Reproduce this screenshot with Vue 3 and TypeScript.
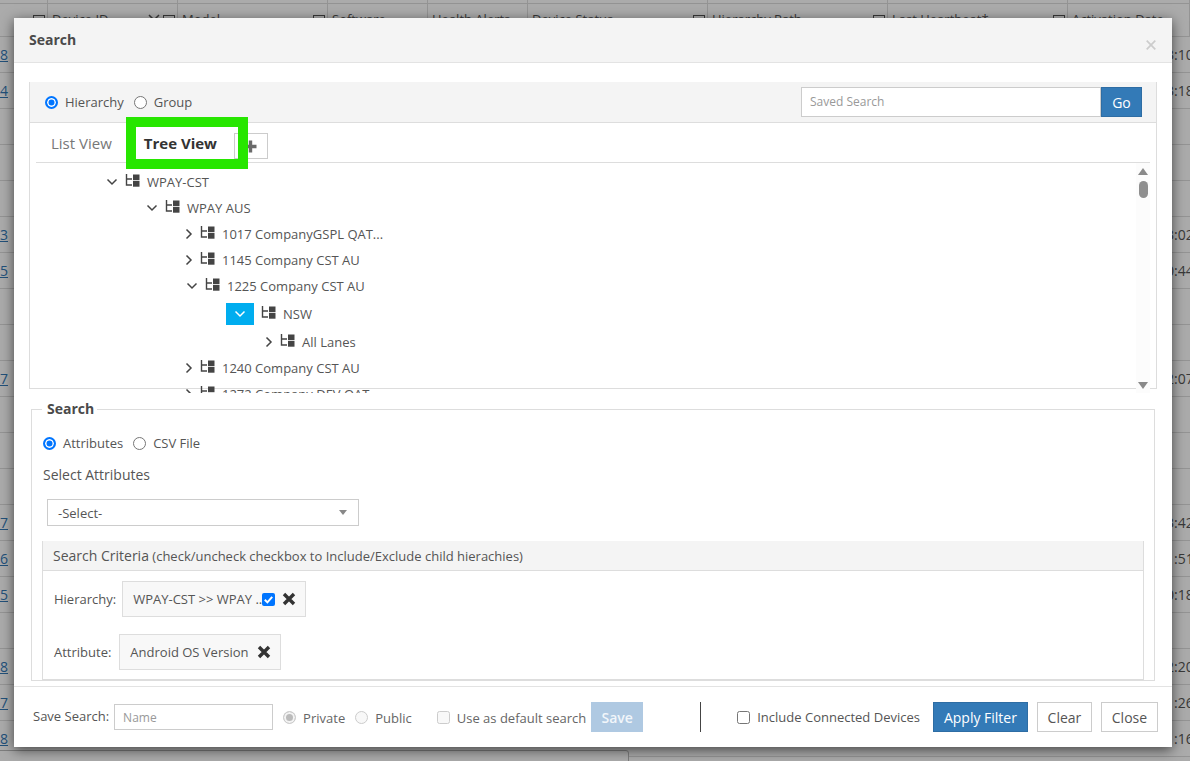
<script setup lang="ts">
const heads = [
  { label: '', w: 48, icon: true, x: false },
  { label: 'Device ID', w: 130, icon: true, x: true },
  { label: 'Model', w: 150, icon: true, x: false },
  { label: 'Software', w: 100, icon: false, x: false },
  { label: 'Health Alerts', w: 100, icon: false, x: false },
  { label: 'Device Status', w: 180, icon: true, x: false },
  { label: 'Hierarchy Path', w: 180, icon: true, x: false },
  { label: 'Last Heartbeat*', w: 180, icon: true, x: false },
  { label: 'Activation Date', w: 122, icon: false, x: false },
]
const idEnd = ['8', '4', '', '', '', '3', '5', '', '', '7', '', '', '', '7', '6', '5', '', '8', '7', '8']
const timeEnd = ['3:10', '3:18', '', '', '', '3:02', '0:44', '', '', '2:07', '', '', '', '3:42', '1:51', '0:18', '', '2:20', '1:26', '1:16']

interface TreeNode { label: string; open: boolean; active?: boolean; cls: string }
const tree: TreeNode[] = [
  { label: 'WPAY-CST', open: true, cls: 'd0' },
  { label: 'WPAY AUS', open: true, cls: 'd1' },
  { label: '1017 CompanyGSPL QAT...', open: false, cls: 'd2' },
  { label: '1145 Company CST AU', open: false, cls: 'd2' },
  { label: '1225 Company CST AU', open: true, cls: 'd2o' },
  { label: 'NSW', open: true, active: true, cls: 'd3' },
  { label: 'All Lanes', open: false, cls: 'd4' },
  { label: '1240 Company CST AU', open: false, cls: 'd2' },
  { label: '1272 Company DEV QAT', open: false, cls: 'd2' },
]
</script>

<template>
  <div class="page">
    <div class="thead">
      <div v-for="h in heads" :key="h.label" class="th" :style="{ width: h.w + 'px' }">
        <span>{{ h.label }}</span>
        <svg v-if="h.x" class="thx" width="12" height="12" viewBox="0 0 12 12"><path d="M1 1l10 10M11 1 1 11" stroke="#555" stroke-width="1.5"/></svg>
        <span v-if="h.icon" class="thicon" :class="{ nox: !h.x }"></span>
      </div>
    </div>
    <div v-for="(e, i) in idEnd" :key="i" class="tr">
      <a class="idend">{{ e }}</a>
      <span class="timeend">{{ timeEnd[i] }}</span>
    </div>
    <div class="pager"></div>
    <div class="backdrop"></div>

    <section class="modal">
      <header class="mhead">
        <h4>Search</h4>
        <svg class="x" width="10" height="10" viewBox="0 0 10 10"><path d="M.7.7l8.6 8.6M9.3.7.7 9.3" stroke="#ccc" stroke-width="1.7"/></svg>
      </header>

      <div class="panel">
        <div class="bar">
          <label class="opt"><span class="radio on"></span>Hierarchy</label>
          <label class="opt"><span class="radio"></span>Group</label>
          <div class="saved">
            <div class="savedinput">Saved Search</div>
            <button class="go">Go</button>
          </div>
        </div>
        <div class="tabs">
          <span class="tab">List View</span>
          <span class="tab active">Tree View</span>
          <span class="plus">
            <svg width="13" height="13" viewBox="0 0 13 13"><path d="M4.8.5h3.4v4.3h4.3v3.4H8.2v4.3H4.8V8.2H.5V4.8h4.3z" fill="#6a6a6a"/></svg>
          </span>
        </div>
        <div class="treewrap">
          <div class="tree">
            <div v-for="n in tree" :key="n.label" class="node" :class="n.cls">
              <span class="toggle" :class="{ act: n.active, closed: !n.open }">
                <svg v-if="n.open" width="12" height="8" viewBox="0 0 12 8"><path d="M1.5 1.5 6 6l4.5-4.5" fill="none" stroke="currentColor" stroke-width="1.5"/></svg>
                <svg v-else width="8" height="12" viewBox="0 0 8 12"><path d="M1.5 1.5 6 6l-4.5 4.5" fill="none" stroke="currentColor" stroke-width="1.5"/></svg>
              </span>
              <svg class="ico" width="15" height="13" viewBox="0 0 15 13">
                <path d="M1.5 0v11H7M1.5 5H7" fill="none" stroke="#444" stroke-width="1.4"/>
                <rect x="8" y="0.5" width="6.5" height="5.7" fill="#444"/>
                <rect x="8" y="7" width="6.5" height="5.7" fill="#444"/>
              </svg>
              <span class="nlabel">{{ n.label }}</span>
            </div>
          </div>
          <div class="scroll">
            <svg width="10" height="7" viewBox="0 0 10 7"><path d="M5 0l5 7H0z" fill="#8a8a8a"/></svg>
            <span class="thumb"></span>
            <span class="grow"></span>
            <svg width="10" height="7" viewBox="0 0 10 7"><path d="M0 0h10L5 7z" fill="#8a8a8a"/></svg>
          </div>
        </div>
      </div>

      <fieldset class="fs">
        <legend>Search</legend>
        <div class="attrs">
          <label class="opt"><span class="radio on"></span>Attributes</label>
          <label class="opt"><span class="radio"></span>CSV File</label>
        </div>
        <div class="selabel">Select Attributes</div>
        <div class="select"><span>-Select-</span><i class="caret"></i></div>
        <div class="crit">
          <div class="crithead"><b>Search Criteria</b> (check/uncheck checkbox to Include/Exclude child hierachies)</div>
          <div class="critbody">
            <div class="critrow r1">
              <span class="clabel">Hierarchy:</span>
              <div class="chip">
                <span>WPAY-CST &gt;&gt; WPAY ..</span>
                <span class="check">
                  <svg width="13" height="13" viewBox="0 0 13 13"><path d="M2.8 6.8 5.4 9.4 10.2 3.8" fill="none" stroke="#fff" stroke-width="2"/></svg>
                </span>
                <svg class="cross" width="14" height="14" viewBox="0 0 14 14"><path d="M2 2l10 10M12 2 2 12" stroke="#333" stroke-width="3.4"/></svg>
              </div>
            </div>
            <div class="critrow r2">
              <span class="clabel">Attribute:</span>
              <div class="chip c2">
                <span>Android OS Version</span>
                <svg class="cross" width="14" height="14" viewBox="0 0 14 14"><path d="M2 2l10 10M12 2 2 12" stroke="#333" stroke-width="3.4"/></svg>
              </div>
            </div>
          </div>
        </div>
      </fieldset>

      <footer class="mfoot">
        <span class="slabel">Save Search:</span>
        <div class="nameinput">Name</div>
        <label class="opt dis"><span class="radio dison"></span>Private</label>
        <label class="opt dis pub"><span class="radio disoff"></span>Public</label>
        <label class="opt dis def"><span class="cb disoff"></span>Use as default search</label>
        <button class="save">Save</button>
        <span class="vsep"></span>
        <label class="opt conn"><span class="cb"></span>Include Connected Devices</label>
        <button class="apply">Apply Filter</button>
        <button class="plain clear">Clear</button>
        <button class="plain close">Close</button>
      </footer>
    </section>

    <div class="annot"></div>
  </div>
</template>

<style>
html, body { margin: 0; overflow: hidden; }
</style>

<style scoped>
* { box-sizing: border-box; }
.page {
  position: relative;
  width: 1190px;
  height: 761px;
  overflow: hidden;
  background: #fff;
  font-family: "Open Sans", "Liberation Sans", sans-serif;
  font-size: 13px;
  color: #555;
}
.thead {
  display: flex;
  height: 37px;
  border-bottom: 1px solid #ddd;
  background: linear-gradient(#ddd, #ddd) 0 3px / 100% 1px no-repeat;
}
.th {
  display: flex;
  border-right: 1px solid #ddd;
  padding: 10px 2px 0 4px;
  font-size: 13px;
  line-height: 18px;
  white-space: nowrap;
}
.thx { margin: 4px 3px 0 auto; flex: none; }
.thicon { width: 12px; height: 12px; border: 1.5px solid #555; margin-top: 5px; flex: none; }
.thicon.nox { margin-left: auto; }
.tr {
  position: relative;
  height: 36px;
  border-bottom: 1px solid #ddd;
  line-height: 36px;
  font-size: 14px;
  white-space: nowrap;
}
.tr:last-of-type { height: 30px; border-bottom: 0; }
.idend { position: absolute; left: 0; color: #337ab7; text-decoration: underline; }
.timeend { position: absolute; left: 1166px; }
.pager {
  position: absolute;
  left: -6px;
  top: 750px;
  width: 635px;
  height: 30px;
  border: 1px solid #bbb;
  border-radius: 3px;
  background: #fff;
}
.backdrop { position: absolute; inset: 0; background: rgba(0, 0, 0, 0.33); }

.modal {
  position: absolute;
  left: 14px;
  top: 18px;
  width: 1158px;
  height: 729px;
  background: #fff;
  box-shadow: 0 3px 12px rgba(0, 0, 0, 0.6);
  display: flex;
  flex-direction: column;
}
.mhead {
  height: 45px;
  flex: none;
  background: #f4f4f4;
  border-bottom: 1px solid #e3e3e3;
  display: flex;
  justify-content: space-between;
  padding: 13px 15px;
}
.mhead h4 { margin: 0; font-size: 14px; font-weight: 700; color: #4a4a4a; line-height: 18px; }
.x { margin: 9px 1px 0 0; }

.panel {
  margin: 19px 15px 0 15px;
  height: 307px;
  flex: none;
  border-left: 1px solid #ddd;
  border-right: 1px solid #ddd;
  border-bottom: 1px solid #ddd;
  position: relative;
}
.bar {
  height: 41px;
  background: #f4f4f4;
  border-bottom: 1px solid #ddd;
  display: flex;
  align-items: center;
  padding-left: 15px;
  gap: 10px;
}
.opt { display: inline-flex; align-items: center; gap: 7px; font-size: 13px; color: #555; }
.radio {
  width: 13px; height: 13px; border-radius: 50%;
  border: 1px solid #767676; background: #fff; display: inline-block; flex: none;
}
.radio.on { border: 2px solid #0075ff; box-shadow: inset 0 0 0 1.5px #fff; background: #0075ff; }
.saved { margin-left: auto; margin-right: 14px; display: flex; }
.savedinput {
  width: 300px; height: 30px; border: 1px solid #ccc; background: #fff;
  color: #999; font-size: 12px; line-height: 28px; padding-left: 8px;
}
.go {
  width: 41px; height: 30px; background: #337ab7; border: 1px solid #2e6da4;
  color: #fff; font: 14px "Open Sans", sans-serif; padding: 0;
}
.tabs {
  height: 40px;
  margin: 0 6px;
  border-bottom: 1px solid #ddd;
  display: flex;
  position: relative;
}
.tab { font-size: 15px; padding: 10px 15px 0 15px; color: #777; line-height: 20px; white-space: nowrap; }
.tab.active { font-weight: 700; color: #333; margin-left: 2px; padding-left: 15px; padding-right: 17px; }
.plus {
  position: absolute; left: 198px; top: 10px; width: 34px; height: 26px;
  border: 1px solid #ccc; display: flex; align-items: center; justify-content: center; padding-right: 1px;
}
.treewrap { display: flex; height: 230px; margin: 0 6px; overflow: hidden; position: relative; }
.tree { flex: 1; overflow: hidden; padding-top: 6px; }
.node { display: flex; align-items: center; height: 26px; white-space: nowrap; font-size: 13px; color: #555; }
.d0 { padding-left: 70px; }
.d1 { padding-left: 110px; }
.d2 { padding-left: 149px; }
.d2o { padding-left: 150px; }
.d3 { padding-left: 190px; height: 30px; }
.d4 { padding-left: 229px; }
.toggle { display: inline-flex; align-items: center; justify-content: center; width: 12px; color: #444; flex: none; }
.toggle.closed { width: 8px; }
.toggle.act { width: 28px; height: 22px; background: #00adef; color: #fff; }
.ico { margin-left: 7px; flex: none; margin-top: -3px; }
.nlabel { margin-left: 7px; }
.scroll {
  width: 14px; flex: none; background: #fcfcfc; display: flex; flex-direction: column; align-items: center;
  padding: 5px 0 4px 0; height: 230px;
}
.thumb { width: 9px; height: 17px; background: #8f8f8f; border-radius: 5px; margin-top: 6px; }
.grow { flex: 1; }

.fs {
  margin: 11px 0 0 17px;
  width: 1124px;
  height: 281px;
  flex: none;
  border: 1px solid #ddd;
  padding: 0 10px;
  min-width: 0;
}
.fs legend { font-size: 14px; font-weight: 700; color: #4a4a4a; margin: 0; padding: 0 3px 0 5px; line-height: 18px; }
.attrs { display: flex; gap: 10px; margin-top: 16px; padding-left: 1px; }
.selabel { font-size: 14px; margin-top: 13px; line-height: 20px; padding-left: 1px; }
.select {
  width: 312px; height: 27px; margin: 14px 0 0 5px; border: 1px solid #ccc;
  display: flex; align-items: center; justify-content: space-between; padding: 0 11px 0 10px; font-size: 13px;
}
.caret { border-left: 4px solid transparent; border-right: 4px solid transparent; border-top: 5px solid #888; }
.crit { margin-top: 15px; border-left: 1px solid #ddd; border-right: 1px solid #ddd; border-bottom: 2px solid #ddd; height: 140px; }
.crithead { height: 30px; background: #f4f4f4; border-bottom: 1px solid #ddd; padding: 5px 10px; font-size: 13px; line-height: 20px; color: #555; }
.crithead b { font-weight: 400; font-size: 14px; }
.critbody { padding: 10px 11px; }
.critrow { display: flex; align-items: center; font-size: 13px; }
.r1 { gap: 6px; }
.r2 { gap: 8px; margin-top: 17px; }
.chip {
  height: 36px; background: #f8f8f8; border: 1px solid #ddd; display: flex; align-items: center; padding: 0 9px 0 10px;
  font-size: 13px;
}
.check { width: 13px; height: 13px; border-radius: 2px; background: #0075ff; display: inline-flex; margin-right: 7px; }
.c2 .cross { margin-left: 8px; }

.mfoot {
  margin-top: 5px;
  flex: 1;
  border-top: 1px solid #e3e3e3;
  display: flex;
  align-items: center;
  padding: 0 14px 0 19px;
  font-size: 13px;
}
.slabel { font-size: 13px; margin-right: 5px; margin-top: -2px; }
.nameinput { width: 159px; height: 26px; border: 1px solid #ccc; color: #999; font-size: 12px; line-height: 26px; padding-left: 8px; }
.dis { color: #666; margin-left: 10px; margin-top: 1px; }
.pub { margin-left: 10px; }
.def { margin-left: 25px; }
.radio.dison { border: 1px solid #ccc; background: #bbb; box-shadow: inset 0 0 0 2px #f3f3f3; }
.radio.disoff { border: 1px solid #ccc; background: #f8f8f8; }
.cb { width: 13px; height: 13px; border: 1px solid #767676; border-radius: 2.5px; background: #fff; display: inline-block; flex: none; }
.cb.disoff { border-color: #ccc; background: #f8f8f8; }
.save {
  margin-left: 5px; width: 52px; height: 30px; background: #afc9e2; border: 1px solid #afc9e2; color: #f2f6fa;
  font: 600 14px "Open Sans", sans-serif; padding: 0;
}
.vsep { width: 1px; height: 30px; background: #444; margin-left: 57px; }
.conn { margin-left: 36px; }
.apply {
  margin-left: 13px; width: 95px; height: 30px; background: #337ab7; border: 1px solid #2e6da4; color: #fff;
  font: 400 14px "Open Sans", sans-serif; padding: 0;
}
.plain {
  height: 30px; background: #fff; border: 1px solid #ccc; color: #555; font: 14px "Open Sans", sans-serif; padding: 0;
}
.clear { width: 55px; margin-left: 9px; }
.close { width: 57px; margin-left: 9px; }
.annot {
  position: absolute; left: 126px; top: 117px; width: 122px; height: 52px;
  border: 10px solid #27e600; pointer-events: none;
}
</style>
